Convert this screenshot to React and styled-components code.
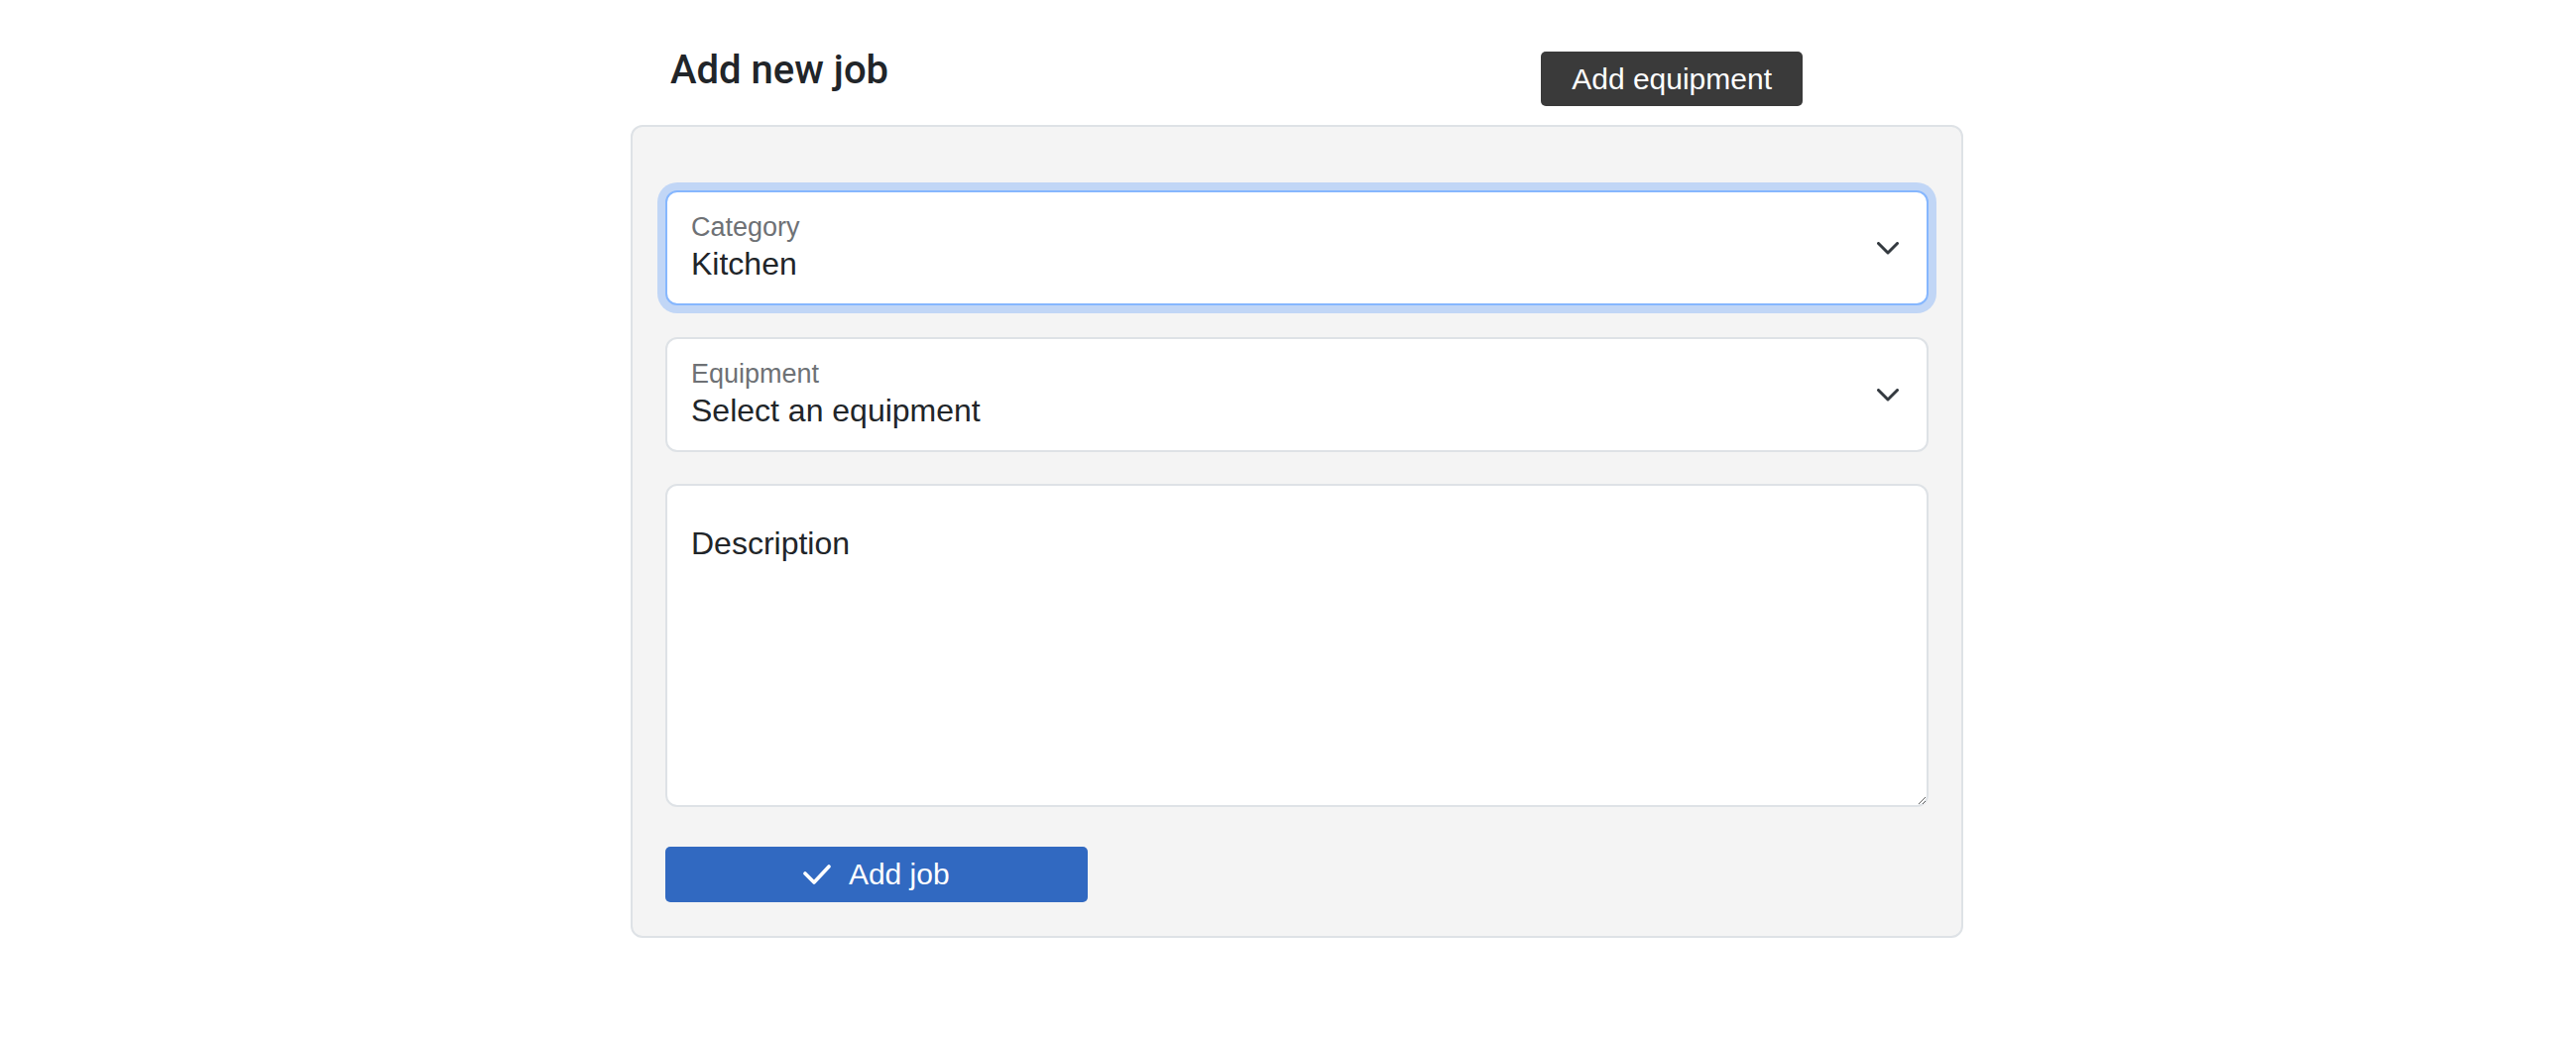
import React from "react";
import styled, { createGlobalStyle } from "styled-components";

const GlobalStyle = createGlobalStyle`
  html, body {
    margin: 0;
    background: #ffffff;
    font-family: "Liberation Sans", Arial, sans-serif;
    color: #212529;
  }
`;

export default function App() {
  return (
    <>
      <GlobalStyle />
      <Page>
        <Container>
          <Header>
            <Title>Add new job</Title>
            <DarkButton type='button'>Add equipment</DarkButton>
          </Header>
          <Panel>
            <SelectField focused label='Category' value='Kitchen' />
            <SelectField label='Equipment' value='Select an equipment' />
            <Description placeholder='Description' />
            <SubmitButton type='button'>
              <CheckIcon />
              Add job
            </SubmitButton>
          </Panel>
        </Container>
      </Page>
    </>
  );
}

function SelectField({ label, value, focused }) {
  return (
    <Field $focused={focused}>
      <FieldText>
        <FieldLabel>{label}</FieldLabel>
        <FieldValue>{value}</FieldValue>
      </FieldText>
      <Chevron width='22' height='13' viewBox='0 0 22 13'>
        <polyline
          points='1.5,1.5 11,11 20.5,1.5'
          fill='none'
          stroke='#343a40'
          strokeWidth='3'
          strokeLinecap='round'
          strokeLinejoin='round'
        />
      </Chevron>
    </Field>
  );
}

function CheckIcon() {
  return (
    <svg width='28' height='20' viewBox='0 0 28 20'>
      <polyline
        points='2,9 11,18 26,2'
        fill='none'
        stroke='#ffffff'
        strokeWidth='3.6'
        strokeLinecap='round'
        strokeLinejoin='round'
      />
    </svg>
  );
}

const Page = styled.div`
  display: flex;
  justify-content: center;
  padding-left: 18px;
`;

const Container = styled.div`
  width: 1344px;
`;

const Header = styled.div`
  display: flex;
  align-items: flex-start;
  padding: 0 0 19px 40px;
`;

const Title = styled.h5`
  margin: 47px 0 0;
  font-family: Roboto, "Liberation Sans", sans-serif;
  font-size: 40px;
  line-height: 48px;
  font-weight: 500;
  color: #212529;
`;

const DarkButton = styled.button`
  display: flex;
  align-items: center;
  height: 55px;
  margin: 52px 162px 0 auto;
  padding: 0 31px;
  border: none;
  border-radius: 5px;
  background: #3a3a3a;
  color: #ffffff;
  font-family: "Liberation Sans", Arial, sans-serif;
  font-size: 30px;
`;

const Panel = styled.div`
  display: flex;
  flex-direction: column;
  align-items: flex-start;
  padding: 64px 33px 34px;
  border: 2px solid #dee2e6;
  border-radius: 12px;
  background: #f4f4f4;
`;

const Field = styled.div`
  box-sizing: border-box;
  display: flex;
  width: 100%;
  height: 116px;
  margin-bottom: 32px;
  padding: 0 28px 0 24px;
  border: 2px solid ${({ $focused }) => ($focused ? "#86b7fe" : "#dee2e6")};
  border-radius: 12px;
  background: #ffffff;
  box-shadow: ${({ $focused }) =>
    $focused ? "0 0 0 8px rgba(13, 110, 253, 0.22)" : "none"};
`;

const FieldText = styled.div`
  display: flex;
  flex-direction: column;
  flex: 1;
  padding-top: 20px;
`;

const FieldLabel = styled.span`
  font-size: 27px;
  line-height: 30px;
  color: #6e7175;
`;

const FieldValue = styled.span`
  font-size: 32px;
  line-height: 44px;
  color: #212529;
`;

const Chevron = styled.svg`
  align-self: center;
  flex-shrink: 0;
`;

const Description = styled.textarea`
  box-sizing: border-box;
  display: block;
  width: 100%;
  height: 326px;
  margin: 0 0 40px;
  padding: 34px 24px 16px;
  border: 2px solid #dee2e6;
  border-radius: 12px;
  background: #ffffff;
  font-family: "Liberation Sans", Arial, sans-serif;
  font-size: 32px;
  line-height: 48px;
  color: #212529;
  resize: vertical;
  outline: none;

  &::placeholder {
    color: #212529;
    opacity: 1;
  }
`;

const SubmitButton = styled.button`
  display: flex;
  align-items: center;
  justify-content: center;
  gap: 18px;
  width: 33.4%;
  height: 56px;
  padding: 0;
  border: none;
  border-radius: 5px;
  background: #3169c1;
  color: #ffffff;
  font-family: "Liberation Sans", Arial, sans-serif;
  font-size: 30px;
`;
